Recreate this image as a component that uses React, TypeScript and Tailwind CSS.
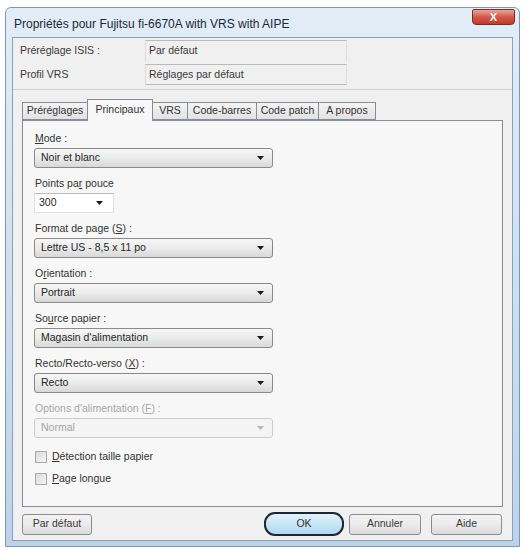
import type { ReactNode } from 'react';

// Windows 7 style "Propriétés" dialog for a scanner driver

const tabs = ['Préréglages', 'Principaux', 'VRS', 'Code-barres', 'Code patch', 'A propos'];
const tabWidths = [66, 64, 36, 69, 62, 57];

function Arrow({ disabled = false }: { disabled?: boolean }) {
  return (
    <svg width="7" height="4" viewBox="0 0 7 4" className="shrink-0">
      <path d="M0 0 L7 0 L3.5 4 Z" fill={disabled ? '#b5b5b5' : '#1a1a1a'} />
    </svg>
  );
}

function Combo({ value, disabled = false }: { value: string; disabled?: boolean }) {
  return (
    <div
      className={`flex h-[20px] w-[239px] items-center justify-between rounded-[3px] border pl-[6px] pr-[8px] ${
        disabled
          ? 'border-[#c9cdd0] bg-[#f4f4f4] text-[#a6a6a6]'
          : 'border-[#8a8a8a] bg-gradient-to-b from-[#f6f6f6] via-[#ebebeb] to-[#d8d8d8] text-[#262626]'
      }`}
    >
      <span>{value}</span>
      <Arrow disabled={disabled} />
    </div>
  );
}

function Field({ label, children, disabled = false }: { label: ReactNode; children: ReactNode; disabled?: boolean }) {
  return (
    <div className="flex flex-col">
      <div className={`h-[14px] pl-[1px] leading-[14px] ${disabled ? 'text-[#a8a8a8]' : 'text-[#333]'}`}>{label}</div>
      <div className="mt-[3px]">{children}</div>
    </div>
  );
}

function Check({ children }: { children: ReactNode }) {
  return (
    <div className="flex h-[14px] items-center gap-[5px]">
      <div className="h-[12px] w-[12px] border border-[#a9a9a9] bg-gradient-to-br from-[#dcdcdc] to-[#f4f4f4]" />
      <span className="text-[#333]">{children}</span>
    </div>
  );
}

function Button({ children, width }: { children: ReactNode; width: string }) {
  return (
    <div
      className={`flex h-[21px] items-center justify-center rounded-[3px] border border-[#8c8c8c] bg-gradient-to-b from-[#f3f3f3] via-[#ebebeb] to-[#dbdbdb] text-[#3a3a3a] ${width}`}
    >
      {children}
    </div>
  );
}

export default function App() {
  return (
    <div
      className="h-[548px] w-[523px] overflow-hidden bg-white pl-[5px] pt-[7px] text-[10.5px]"
      style={{ fontFamily: '"Liberation Sans", Arial, sans-serif' }}
    >
      <div className="flex h-[540px] w-[515px] flex-col rounded-t-[6px] border border-[#7e98b4] bg-gradient-to-b from-[#e3edf8] via-[#cfdff0] to-[#bed3ea]">
        {/* title bar */}
        <div className="flex h-[29px] items-start justify-between pl-[8px] pr-[4px]">
          <span className="mt-[7px] text-[12px] text-[#1d2836]">Propriétés pour Fujitsu fi-6670A with VRS with AIPE</span>
          <div className="mt-[1px] flex h-[16px] w-[43px] items-center justify-center rounded-b-[4px] rounded-t-[2px] border border-[#7a2e2a] bg-gradient-to-b from-[#e8a59a] via-[#d2584b] to-[#c23a2c]">
            <span className="text-[11px] font-bold leading-none text-white">X</span>
          </div>
        </div>

        {/* client area */}
        <div className="mx-[6px] mb-[5px] flex flex-1 flex-col border border-[#8aa0b8] bg-[#f0f0f0]">
          <div className="flex flex-col gap-[3px] pt-[2px]">
            <div className="flex h-[21px] items-center">
              <span className="w-[132px] pl-[7px] text-[#3a3a3a]">Préréglage ISIS :</span>
              <div className="flex h-[21px] w-[202px] items-center border-t border-[#b9b9b9] border-x border-x-[#dedede] pl-[3px] text-[#3a3a3a]">
                Par défaut
              </div>
            </div>
            <div className="flex h-[21px] items-center">
              <span className="w-[132px] pl-[7px] text-[#3a3a3a]">Profil VRS</span>
              <div className="flex h-[21px] w-[202px] items-center border-y border-[#b9b9b9] border-x border-x-[#dedede] pl-[3px] text-[#3a3a3a]">
                Réglages par défaut
              </div>
            </div>
          </div>
          <div className="mt-[4px] h-px bg-[#d3d3d3]" />

          {/* tabs */}
          <div className="ml-[9px] mt-[9px] flex items-end">
            {tabs.map((t, i) =>
              i === 1 ? (
                <div
                  key={t}
                  className="relative z-10 -mb-px -ml-px -mr-px flex h-[22px] items-start justify-center border border-b-0 border-[#898c95] bg-[#f7f7f7] pt-[2px] text-[#333]"
                  style={{ width: tabWidths[i] + 2 }}
                >
                  {t}
                </div>
              ) : (
                <div
                  key={t}
                  className="flex h-[18px] items-center justify-center border border-[#898c95] bg-gradient-to-b from-[#f4f4f4] to-[#e2e2e2] text-[#333] [&+&]:border-l-0"
                  style={{ width: tabWidths[i] }}
                >
                  {t}
                </div>
              ),
            )}
          </div>

          {/* tab panel */}
          <div className="mx-[9px] flex h-[387px] flex-col border border-[#898c95] bg-[#f7f7f7] pl-[11px] pt-[10px]">
            <div className="flex flex-col gap-[8px]">
              <Field label={<><u>M</u>ode :</>}>
                <Combo value="Noir et blanc" />
              </Field>
              <Field label={<>Points pa<u>r</u> pouce</>}>
                <div className="flex h-[20px] w-[80px] items-center justify-between border border-[#e2e2e2] border-t-[#bdbdbd] bg-white pl-[4px] pr-[10px] text-[#262626]">
                  <span>300</span>
                  <Arrow />
                </div>
              </Field>
              <Field label={<>Format de page (<u>S</u>) :</>}>
                <Combo value="Lettre US - 8,5 x 11 po" />
              </Field>
              <Field label={<>O<u>r</u>ientation :</>}>
                <Combo value="Portrait" />
              </Field>
              <Field label={<>So<u>u</u>rce papier :</>}>
                <Combo value="Magasin d'alimentation" />
              </Field>
              <Field label={<>Recto/Recto-verso (<u>X</u>) :</>}>
                <Combo value="Recto" />
              </Field>
              <Field disabled label={<>Options d'alimentation (<u>F</u>) :</>}>
                <Combo disabled value="Normal" />
              </Field>
            </div>
            <div className="mt-[12px] flex flex-col gap-[8px] pl-[1px]">
              <Check><u>D</u>étection taille papier</Check>
              <Check><u>P</u>age longue</Check>
            </div>
          </div>

          {/* buttons */}
          <div className="mt-[5px] flex items-center pl-[9px] pr-[10px]">
            <Button width="w-[70px]">Par défaut</Button>
            <div className="flex-1" />
            <div className="flex h-[24px] w-[80px] items-center justify-center rounded-[11px] border-[2px] border-[#1a2633] bg-gradient-to-b from-[#e2f3fb] via-[#c7e6f6] to-[#b0d9ef] text-[#333]">
              OK
            </div>
            <div className="w-[5px]" />
            <Button width="w-[72px]">Annuler</Button>
            <div className="w-[10px]" />
            <Button width="w-[71px]">Aide</Button>
          </div>
        </div>
      </div>
    </div>
  );
}
